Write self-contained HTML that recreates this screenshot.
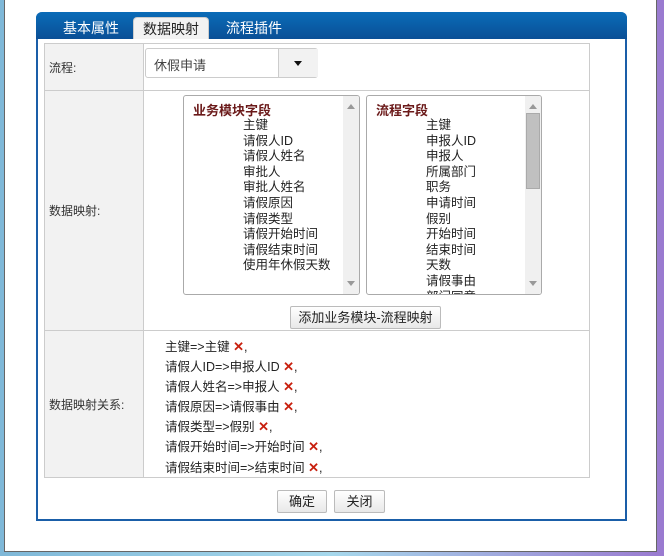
<!DOCTYPE html>
<html><head><meta charset="utf-8"><style>
*{margin:0;padding:0;box-sizing:border-box}
body{width:664px;height:556px;overflow:hidden;background:linear-gradient(90deg,#7fb8d8,#a6d8ec 50%,#9a7ad0);font-family:"Liberation Sans","Noto Sans CJK SC","WenQuanYi Zen Hei",sans-serif;font-size:12px;color:#222;position:relative}
.win{position:absolute;left:4px;top:-2px;width:653px;height:554px;background:#fff;border:1px solid #666}
.panel{position:absolute;left:36px;top:12px;width:591px;height:509px;border:2px solid #1a5ea8;border-top:none;border-radius:6px 6px 0 0;background:#fff}
.hdr{position:absolute;left:-2px;top:0;width:591px;height:27px;background:linear-gradient(#0a6cb8,#0a4f96);border-radius:6px 6px 0 0}
.tab{position:absolute;top:5px;height:22px;color:#fff;font-size:14px;line-height:22px}
.tab.a{background:#f2f2f2;color:#222;border-radius:4px 4px 0 0;border:1px solid #ccc;border-bottom:none;width:76px;text-align:center}
table{position:absolute;left:6px;top:31px;width:546px;border-collapse:collapse}
td{border:1px solid #ccc;vertical-align:middle}
td.l{width:99px;background:#f2f2f2;padding-left:4px;color:#333}
.sel{position:absolute;left:145px;top:48px;width:173px;height:30px;border:1px solid #ccc;border-radius:3px;background:#fff}
.sel span{position:absolute;left:8px;top:6px;font-size:13px;color:#444}
.sel i{position:absolute;left:132px;top:0;width:40px;height:28px;border-left:1px solid #ccc;background:#f2f2f2}
.sel i:after{content:"";position:absolute;left:15px;top:12px;border:4px solid transparent;border-top:5px solid #111}
.lb{position:absolute;top:95px;height:200px;border:1px solid #aaa;border-radius:3px;background:#fff;overflow:hidden}
.lb .h{position:absolute;left:9px;top:4px;font-weight:bold;color:#6b1a1a;font-size:13px}
.lb .it{position:absolute;top:22px;line-height:15.6px;font-size:12.5px;color:#222}
.sb{position:absolute;right:0;top:0;width:16px;height:100%;background:#f0f0f0}
.sb .u,.sb .d{position:absolute;left:4px;border:4px solid transparent}
.sb .u{top:4px;border-bottom:5px solid #999}
.sb .d{bottom:4px;border-top:5px solid #999}
.btn{position:absolute;height:23px;border:1px solid #bbb;border-radius:2px;background:linear-gradient(#fff,#e8e8e8);text-align:center;line-height:21px;font-size:13px;color:#222}
.map{position:absolute;left:165px;top:337px;line-height:20.1px;font-size:12.5px}
.x{color:#c8200e;font-weight:bold;font-size:13px}
</style></head><body>
<div class="win"></div>
<div class="panel">
<div class="hdr">
<div class="tab" style="left:27px">基本属性</div>
<div class="tab a" style="left:97px">数据映射</div>
<div class="tab" style="left:190px">流程插件</div>
</div>
<table>
<tr style="height:47px"><td class="l">流程:</td><td></td></tr>
<tr style="height:240px"><td class="l">数据映射:</td><td></td></tr>
<tr style="height:147px"><td class="l">数据映射关系:</td><td></td></tr>
</table>
</div>
<div class="sel"><span>休假申请</span><i></i></div>
<div class="lb" style="left:183px;width:177px">
<div class="h">业务模块字段</div>
<div class="it" style="left:59px">主键<br>请假人ID<br>请假人姓名<br>审批人<br>审批人姓名<br>请假原因<br>请假类型<br>请假开始时间<br>请假结束时间<br>使用年休假天数</div>
<div class="sb"><b class="u"></b><b class="d"></b></div>
</div>
<div class="lb" style="left:366px;width:176px">
<div class="h">流程字段</div>
<div class="it" style="left:59px">主键<br>申报人ID<br>申报人<br>所属部门<br>职务<br>申请时间<br>假别<br>开始时间<br>结束时间<br>天数<br>请假事由<br>部门同意</div>
<div class="sb"><b class="u"></b><div style="position:absolute;left:1px;top:17px;width:14px;height:76px;background:#c0c0c0;border:1px solid #aaa"></div><b class="d"></b></div>
</div>
<div class="btn" style="left:290px;top:306px;width:151px">添加业务模块-流程映射</div>
<div class="map">主键=>主键 <span class="x">✕</span>,<br>请假人ID=>申报人ID <span class="x">✕</span>,<br>请假人姓名=>申报人 <span class="x">✕</span>,<br>请假原因=>请假事由 <span class="x">✕</span>,<br>请假类型=>假别 <span class="x">✕</span>,<br>请假开始时间=>开始时间 <span class="x">✕</span>,<br>请假结束时间=>结束时间 <span class="x">✕</span>,</div>
<div class="btn" style="left:277px;top:490px;width:50px">确定</div>
<div class="btn" style="left:334px;top:490px;width:51px">关闭</div>
</body></html>
